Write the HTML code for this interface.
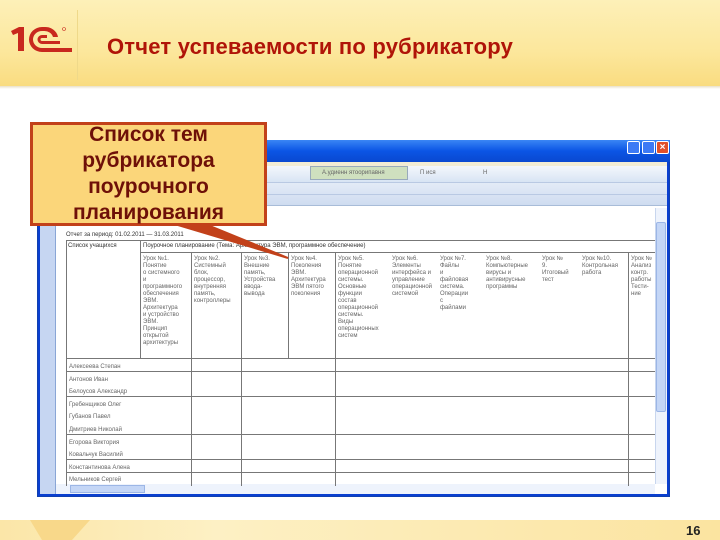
<!DOCTYPE html>
<html><head><meta charset="utf-8"><style>
*{margin:0;padding:0;box-sizing:border-box}
body{width:720px;height:540px;position:relative;overflow:hidden;background:#fff;font-family:"Liberation Sans",sans-serif}
.a{position:absolute}
.t{position:absolute;font-size:6px;color:#666;line-height:7px;white-space:nowrap}
</style></head><body>
<div class="a" style="left:0;top:0;width:720px;height:86px;background:linear-gradient(180deg,#fdf0b8 0%,#fce79c 60%,#f9dc80 100%)"></div>
<div class="a" style="left:0;top:86px;width:720px;height:3px;background:linear-gradient(#e8e0c8,#fff)"></div>
<div class="a" style="left:77px;top:10px;width:1px;height:70px;background:#efd98a"></div>
<svg class="a" style="left:0;top:0" width="80" height="80" viewBox="0 0 80 80">
<path d="M11 31 L19 27 H24 V51 H18 V33 L13 35 Z" fill="#c8281e"/>
<path d="M44 27 H42 A13 12.5 0 0 0 42 52 H72 V48 H42 A9 8.5 0 0 1 42 31 H44 A9 8.5 0 0 1 53 37 H58 A13 12 0 0 0 44 27 Z" fill="#c8281e"/>
<path d="M42 35 A4.5 4.5 0 0 0 42 44 H60 V41 H42 A1.5 1.5 0 0 1 42 38 H47 V35 Z" fill="#c8281e"/>
<circle cx="64" cy="29" r="1.5" fill="none" stroke="#c8281e" stroke-width=".6"/>
</svg>
<div class="a" style="left:107px;top:34px;font-size:22px;font-weight:bold;color:#b01408;letter-spacing:.2px">Отчет успеваемости по рубрикатору</div>

<!-- window -->
<div class="a" style="left:37px;top:140px;width:633px;height:357px;background:#0a3fd0;border:1px solid #1040b0"></div>
<div class="a" style="left:37px;top:140px;width:633px;height:22px;background:linear-gradient(#3a86f5,#0b55e5 50%,#0a48d0)"></div>
<div class="a" style="left:627px;top:141px;width:13px;height:13px;background:#3d7af5;border:1px solid #fff;border-radius:2px"></div>
<div class="a" style="left:642px;top:141px;width:13px;height:13px;background:#3d7af5;border:1px solid #fff;border-radius:2px"></div>
<div class="a" style="left:656px;top:141px;width:13px;height:13px;background:#e0502a;border:1px solid #fff;border-radius:2px;color:#fff;font-size:10px;font-weight:bold;text-align:center;line-height:11px">×</div>
<div class="a" style="left:40px;top:162px;width:627px;height:4px;background:#f3ecd4"></div>
<div class="a" style="left:40px;top:166px;width:627px;height:16px;background:linear-gradient(#f4f7fc,#d8e4f4)"></div>
<div class="a" style="left:310px;top:166px;width:98px;height:14px;background:#cfe0bf;border:1px solid #9ab"></div>
<div class="t" style="left:322px;top:170px">А.удиенн ятоорипавня</div>
<div class="t" style="left:420px;top:170px">П  ися</div>
<div class="t" style="left:483px;top:170px">Н</div>
<div class="a" style="left:40px;top:182px;width:627px;height:24px;background:linear-gradient(#e3ebf7,#cfdcf0);border-top:1px solid #b9c9e3;border-bottom:1px solid #a8bcd8"></div>
<div class="a" style="left:40px;top:194px;width:627px;height:1px;background:#b9c9e3"></div>
<div class="a" style="left:40px;top:206px;width:627px;height:288px;background:#fff"></div>
<div class="a" style="left:40px;top:206px;width:16px;height:288px;background:#c6d6f2;border-right:1px solid #8aa6d6"></div>
<div class="a" style="left:655px;top:208px;width:12px;height:276px;background:#eef3fc;border-left:1px solid #c8d6ee"></div>
<div class="a" style="left:656px;top:222px;width:10px;height:190px;background:#c4d6f6;border:1px solid #9cb6e6;border-radius:2px"></div>
<div class="a" style="left:56px;top:484px;width:599px;height:10px;background:#eef3fc"></div>
<div class="a" style="left:70px;top:485px;width:75px;height:8px;background:#c4d6f6;border:1px solid #9cb6e6"></div>

<div class="t" style="left:66px;top:232px;color:#333">Отчет за период: 01.02.2011 — 31.03.2011</div>
<div class="a" style="left:66px;top:240px;width:589px;height:1px;background:#777"></div>
<div class="t" style="left:68px;top:243px;color:#333">Список учащихся</div>
<div class="t" style="left:143px;top:243px;color:#333">Поурочное планирование (Тема: Архитектура ЭВМ, программное обеспечение)</div>
<div class="a" style="left:140px;top:252px;width:515px;height:1px;background:#777"></div>
<div class="a" style="left:66px;top:240px;width:1px;height:246px;background:#777"></div>
<div class="a" style="left:140px;top:240px;width:1px;height:118px;background:#777"></div>
<div class="a" style="left:191px;top:252px;width:1px;height:234px;background:#777"></div>
<div class="a" style="left:241px;top:252px;width:1px;height:234px;background:#777"></div>
<div class="a" style="left:288px;top:252px;width:1px;height:106px;background:#777"></div>
<div class="a" style="left:335px;top:252px;width:1px;height:234px;background:#777"></div>
<div class="a" style="left:628px;top:252px;width:1px;height:234px;background:#777"></div>

<div class="t" style="left:143px;top:256px">Урок №1.<br>Понятие<br>о системного<br>и<br>программного<br>обеспечения<br>ЭВМ.<br>Архитектура<br>и устройство<br>ЭВМ.<br>Принцип<br>открытой<br>архитектуры</div>
<div class="t" style="left:194px;top:256px">Урок №2.<br>Системный<br>блок,<br>процессор,<br>внутренняя<br>память,<br>контроллеры</div>
<div class="t" style="left:244px;top:256px">Урок №3.<br>Внешние<br>память,<br>Устройства<br>ввода-<br>вывода</div>
<div class="t" style="left:291px;top:256px">Урок №4.<br>Поколения<br>ЭВМ.<br>Архитектура<br>ЭВМ пятого<br>поколения</div>
<div class="t" style="left:338px;top:256px">Урок №5.<br>Понятие<br>операционной<br>системы.<br>Основные<br>функции<br>состав<br>операционной<br>системы.<br>Виды<br>операционных<br>систем</div>
<div class="t" style="left:392px;top:256px">Урок №6.<br>Элементы<br>интерфейса и<br>управление<br>операционной<br>системой</div>
<div class="t" style="left:440px;top:256px">Урок №7.<br>Файлы<br>и<br>файловая<br>система.<br>Операции<br>с<br>файлами</div>
<div class="t" style="left:486px;top:256px">Урок №8.<br>Компьютерные<br>вирусы и<br>антивирусные<br>программы</div>
<div class="t" style="left:542px;top:256px">Урок №<br>9.<br>Итоговый<br>тест</div>
<div class="t" style="left:582px;top:256px">Урок №10.<br>Контрольная<br>работа</div>
<div class="t" style="left:631px;top:256px">Урок №<br>Анализ<br>контр.<br>работы<br>Тести-<br>ние</div>

<div class="a" style="left:66px;top:358px;width:589px;height:1px;background:#777"></div>
<div class="a" style="left:66px;top:371px;width:589px;height:1px;background:#777"></div>
<div class="a" style="left:66px;top:396px;width:589px;height:1px;background:#777"></div>
<div class="a" style="left:66px;top:434px;width:589px;height:1px;background:#777"></div>
<div class="a" style="left:66px;top:459px;width:589px;height:1px;background:#777"></div>
<div class="a" style="left:66px;top:472px;width:589px;height:1px;background:#777"></div>
<div class="t" style="left:69px;top:361px;line-height:12.6px">Алексеева Степан<br>Антонов Иван<br>Белоусов Александр<br>Гребенщиков Олег<br>Губанов Павел<br>Дмитриев Николай<br>Егорова Виктория<br>Ковальчук Василий<br>Константинова Алена<br>Мельников Сергей</div>

<!-- arrow -->
<svg class="a" style="left:0;top:0" width="720" height="540">
<path d="M168 222 L288 258 L200 222 Z" fill="#c2411a" stroke="#c2411a" stroke-width="2"/>
</svg>
<div class="a" style="left:30px;top:122px;width:237px;height:104px;background:#fbd67a;border:3px solid #c2411a;color:#6e1008;font-weight:bold;font-size:21px;line-height:26px;text-align:center;margin:0">
<div style="margin-top:-3px">Список тем<br>рубрикатора<br>поурочного<br>планирования</div></div>

<div class="a" style="left:0;top:520px;width:720px;height:20px;background:linear-gradient(90deg,#fbe6a8,#fdf0c4 30%,#fbe4a0)"></div>
<div class="a" style="left:30px;top:520px;width:60px;height:20px;background:#f8d88a;clip-path:polygon(0 0,100% 0,70% 100%,20% 100%)"></div>
<div class="a" style="left:686px;top:523px;font-size:13px;font-weight:bold;color:#222">16</div>
</body></html>
